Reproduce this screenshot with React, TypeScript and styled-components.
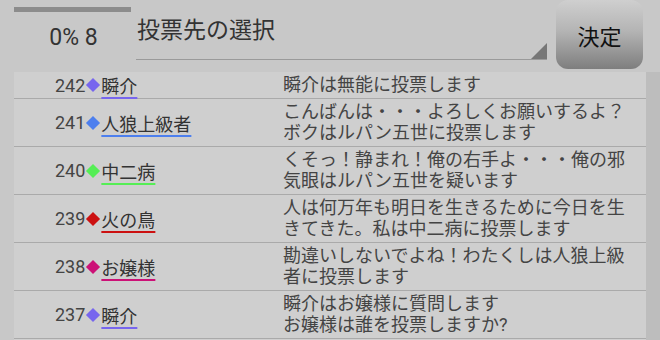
import styled, { createGlobalStyle } from "styled-components";

const GlobalStyle = createGlobalStyle`
  html, body {
    margin: 0;
    padding: 0;
    background: #c8c8c8;
    font-family: Roboto, "Noto Sans CJK JP", sans-serif;
  }
`;

const Screen = styled.div`
  width: 660px;
  height: 340px;
  overflow: hidden;
  display: flex;
  flex-direction: column;
  background: #c8c8c8;
`;

const Header = styled.div`
  height: 72px;
  display: flex;
  align-items: flex-start;
  padding-left: 14px;
  flex-shrink: 0;
`;

const Status = styled.div`
  width: 122px;
  display: flex;
  flex-direction: column;
  align-items: center;
  padding-top: 7px;
`;

const Progress = styled.div`
  align-self: flex-start;
  width: 117px;
  height: 5px;
  background: #8c8c8c;
`;

const Count = styled.div`
  margin-top: 11px;
  margin-right: 3px;
  font-size: 23px;
  line-height: 30px;
  color: #333;
`;

const Select = styled.div`
  position: relative;
  width: 411px;
  height: 60px;
  border-bottom: 1px solid #9a9a9a;
  font-size: 23px;
  line-height: 30px;
  color: #333;
  padding: 16px 0 0 1px;
  box-sizing: border-box;

  &::after {
    content: "";
    position: absolute;
    right: 0;
    bottom: 0;
    width: 0;
    height: 0;
    border-left: 16px solid transparent;
    border-bottom: 16px solid #777;
  }
`;

const Button = styled.div`
  margin-left: 9px;
  width: 87px;
  height: 69px;
  border-radius: 12px;
  background: linear-gradient(#cfcfcf 0%, #b4b4b4 45%, #7e7e7e 100%);
  display: flex;
  align-items: center;
  justify-content: center;
  font-size: 22px;
  color: #111;
`;

const Body = styled.div`
  flex: 1;
  display: flex;
`;

const Table = styled.div`
  margin-left: 14px;
  width: 632px;
  background: #cfcfcf;
`;

const Gutter = styled.div`
  flex: 1;
  background: #bdbdbd;
`;

const Row = styled.div`
  display: flex;
  border-bottom: 1px solid #aaa;
`;

const Speaker = styled.div`
  width: 228px;
  padding-left: 41px;
  display: flex;
  align-items: center;
  font-size: 18px;
  color: #444;
`;

const Diamond = styled.span<{ color: string }>`
  width: 10px;
  height: 10px;
  margin: 0 3px;
  background: ${(p) => p.color};
  transform: rotate(45deg);
`;

const Name = styled.span<{ color: string }>`
  color: #333;
  text-decoration: underline;
  text-decoration-color: ${(p) => p.color};
  text-decoration-thickness: 2px;
  text-underline-offset: 4px;
`;

const Message = styled.div`
  width: 350px;
  padding: 2px 0 3px;
  font-size: 18px;
  line-height: 21px;
  color: #444;
`;

const logs = [
  { no: 242, name: "瞬介", color: "#7766ee", text: "瞬介は無能に投票します" },
  {
    no: 241,
    name: "人狼上級者",
    color: "#4d7fee",
    text: "こんばんは・・・よろしくお願いするよ？ボクはルパン五世に投票します",
  },
  {
    no: 240,
    name: "中二病",
    color: "#55ee55",
    text: "くそっ！静まれ！俺の右手よ・・・俺の邪気眼はルパン五世を疑います",
  },
  {
    no: 239,
    name: "火の鳥",
    color: "#cc1111",
    text: "人は何万年も明日を生きるために今日を生きてきた。私は中二病に投票します",
  },
  {
    no: 238,
    name: "お嬢様",
    color: "#cc1177",
    text: "勘違いしないでよね！わたくしは人狼上級者に投票します",
  },
  {
    no: 237,
    name: "瞬介",
    color: "#7766ee",
    text: "瞬介はお嬢様に質問します\nお嬢様は誰を投票しますか?",
  },
];

export default function App() {
  return (
    <>
      <GlobalStyle />
      <Screen>
        <Header>
          <Status>
            <Progress />
            <Count>0% 8</Count>
          </Status>
          <Select>投票先の選択</Select>
          <Button>決定</Button>
        </Header>
        <Body>
          <Table>
            {logs.map((log) => (
              <Row key={log.no}>
                <Speaker>
                  {log.no}
                  <Diamond color={log.color} />
                  <Name color={log.color}>{log.name}</Name>
                </Speaker>
                <Message>
                  {log.text.split("\n").map((line, i) => (
                    <div key={i}>{line}</div>
                  ))}
                </Message>
              </Row>
            ))}
          </Table>
          <Gutter />
        </Body>
      </Screen>
    </>
  );
}
